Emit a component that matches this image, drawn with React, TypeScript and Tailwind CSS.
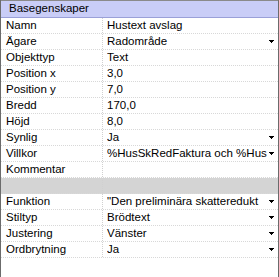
const rows: { label: string; value: string; arrow?: boolean; gray?: boolean }[] = [
  { label: 'Namn', value: 'Hustext avslag' },
  { label: 'Ägare', value: 'Radområde', arrow: true },
  { label: 'Objekttyp', value: 'Text' },
  { label: 'Position x', value: '3,0' },
  { label: 'Position y', value: '7,0' },
  { label: 'Bredd', value: '170,0' },
  { label: 'Höjd', value: '8,0' },
  { label: 'Synlig', value: 'Ja', arrow: true },
  { label: 'Villkor', value: '%HusSkRedFaktura och %Hus', arrow: true },
  { label: 'Kommentar', value: '' },
  { label: '', value: '', gray: true },
  { label: 'Funktion', value: '"Den preliminära skatteredukt', arrow: true },
  { label: 'Stiltyp', value: 'Brödtext', arrow: true },
  { label: 'Justering', value: 'Vänster', arrow: true },
  { label: 'Ordbrytning', value: 'Ja', arrow: true },
]

function Arrow() {
  return (
    <svg width="7" height="5" viewBox="0 0 7 5" className="shrink-0 ml-[1px]">
      <path d="M1 1h5v1H1zM2 2h3v1H2zM3 3h1v1H3z" fill="#000" />
    </svg>
  )
}

export default function App() {
  return (
    <div
      className="w-[279px] h-[277px] bg-white border-l border-r border-[#6b6b6b] text-black overflow-hidden"
      style={{ fontFamily: 'Tahoma, "Liberation Sans", Arial, sans-serif' }}
    >
      <div className="h-[18px] bg-[#c9cdf7] border-b border-[#9aa0d8] border-t border-t-[#8a8a8a] flex items-center pl-[8px] text-[11.5px] leading-none">
        Basegenskaper
      </div>
      {rows.map((r, i) => (
        <div
          key={i}
          className={`h-[16px] flex border-b border-dotted border-[#d8d8d8] text-[11.5px] leading-none ${r.gray ? 'bg-[#d4d4d4]' : ''}`}
        >
          <div className="w-[102px] shrink-0 border-r border-dotted border-[#d0d0d0] pl-[5px] flex items-center">
            {r.label}
          </div>
          <div className="flex-1 flex items-center pl-[4px] pr-[3px] overflow-hidden">
            <span className="flex-1 min-w-0 whitespace-nowrap overflow-hidden">{r.value}</span>
            {r.arrow && <Arrow />}
          </div>
        </div>
      ))}
    </div>
  )
}
